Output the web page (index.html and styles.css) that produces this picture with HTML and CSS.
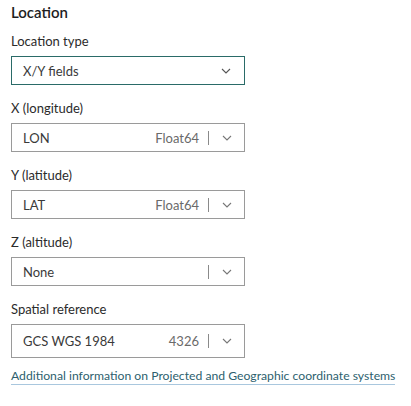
FILE: index.html
```html
<!DOCTYPE html>
<html lang="en">
<head>
<meta charset="utf-8">
<title>Location</title>
<link rel="stylesheet" href="styles.css">
</head>
<body>
<div class="panel">
  <div class="heading">Location</div>

  <div class="field">
    <div class="label">Location type</div>
    <div class="select select-active">
      <span class="value">X/Y fields</span>
      <span class="chev"><svg width="10" height="6" viewBox="0 0 10 6"><path d="M1 1l4 4 4-4" fill="none" stroke="#555" stroke-width="1.1"/></svg></span>
    </div>
  </div>

  <div class="field">
    <div class="label">X (longitude)</div>
    <div class="select">
      <span class="value">LON</span>
      <span class="meta">Float64</span>
      <span class="divider"></span>
      <span class="chev"><svg width="10" height="6" viewBox="0 0 10 6"><path d="M1 1l4 4 4-4" fill="none" stroke="#777" stroke-width="1.1"/></svg></span>
    </div>
  </div>

  <div class="field">
    <div class="label">Y (latitude)</div>
    <div class="select">
      <span class="value">LAT</span>
      <span class="meta">Float64</span>
      <span class="divider"></span>
      <span class="chev"><svg width="10" height="6" viewBox="0 0 10 6"><path d="M1 1l4 4 4-4" fill="none" stroke="#777" stroke-width="1.1"/></svg></span>
    </div>
  </div>

  <div class="field">
    <div class="label">Z (altitude)</div>
    <div class="select">
      <span class="value">None</span>
      <span class="meta"></span>
      <span class="divider"></span>
      <span class="chev"><svg width="10" height="6" viewBox="0 0 10 6"><path d="M1 1l4 4 4-4" fill="none" stroke="#777" stroke-width="1.1"/></svg></span>
    </div>
  </div>

  <div class="field">
    <div class="label">Spatial reference</div>
    <div class="select select-tall">
      <span class="value">GCS WGS 1984</span>
      <span class="meta">4326</span>
      <span class="divider"></span>
      <span class="chev"><svg width="10" height="6" viewBox="0 0 10 6"><path d="M1 1l4 4 4-4" fill="none" stroke="#777" stroke-width="1.1"/></svg></span>
    </div>
  </div>

  <a class="link" href="#">Additional information on Projected and Geographic coordinate systems</a>
</div>
</body>
</html>
```

FILE: styles.css
```css
html, body {
  margin: 0;
  padding: 0;
  background: #ffffff;
}
body {
  font-family: Lato, "Open Sans", "Liberation Sans", sans-serif;
  color: #151515;
}
.panel {
  width: 234px;
  padding: 2px 11px 0 11px;
  display: flex;
  flex-direction: column;
}
.heading {
  font-size: 15px;
  line-height: 20px;
  font-weight: 600;
  color: #1e1e1e;
  margin-bottom: 10px;
}
.field {
  display: flex;
  flex-direction: column;
  gap: 6px;
  margin-bottom: 14px;
}
.label {
  font-size: 13px;
  line-height: 18px;
  color: #2b2b2b;
}
.select {
  box-sizing: border-box;
  height: 29px;
  border: 1px solid #9a9a9a;
  display: flex;
  align-items: center;
  padding: 0 12px 0 11px;
  font-size: 13px;
  color: #3a3a3a;
}
.select-active {
  border-color: #2a6b68;
}
.select-tall {
  height: 34px;
}
.value {
  flex: 1;
}
.meta {
  color: #6a6a6a;
  margin-right: 9px;
}
.divider {
  width: 1px;
  height: 14px;
  background: #8a8a8a;
  margin-right: 13px;
}
.chev {
  display: flex;
  align-items: center;
  width: 10px;
}
.select-active .chev {
  margin-right: 1px;
}
.link {
  margin-top: -4px;
  font-size: 12.2px;
  line-height: 16px;
  color: #2d5f6e;
  text-decoration: none;
  border-bottom: 1px solid #a9c7de;
  align-self: flex-start;
  white-space: nowrap;
}
```
